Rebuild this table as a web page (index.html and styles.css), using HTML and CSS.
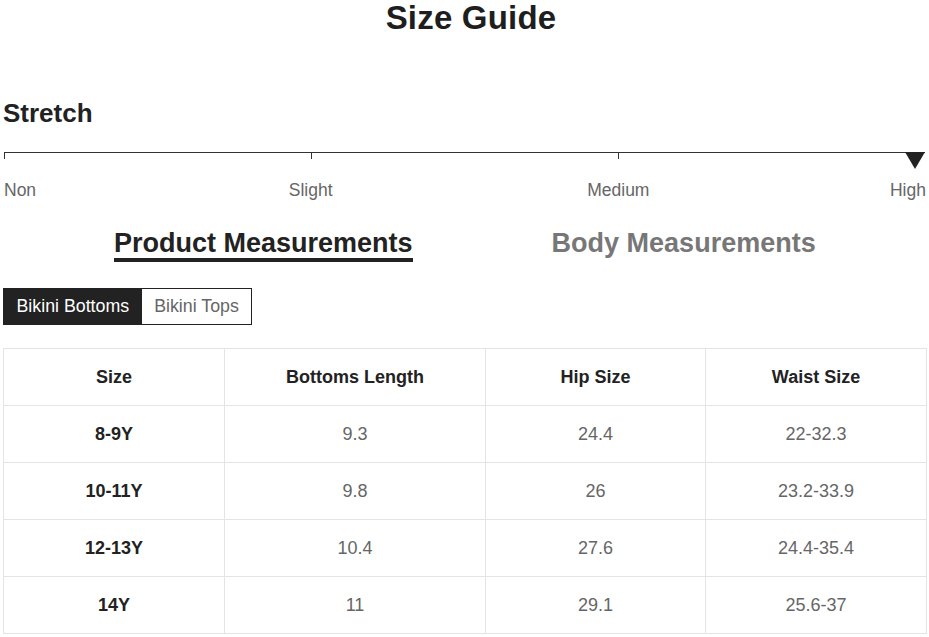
FILE: index.html
```html
<!DOCTYPE html>
<html lang="en">
<head>
<meta charset="utf-8">
<title>Size Guide</title>
<link rel="stylesheet" href="styles.css">
</head>
<body>
<div class="page">
  <h1 class="title">Size Guide</h1>

  <h2 class="stretch-title">Stretch</h2>
  <div class="scale">
    <span class="tick"></span>
    <span class="tick"></span>
    <span class="tick"></span>
    <span class="marker"></span>
  </div>
  <div class="scale-labels">
    <span class="lbl lbl-non">Non</span>
    <span class="lbl lbl-slight">Slight</span>
    <span class="lbl lbl-medium">Medium</span>
    <span class="lbl lbl-high">High</span>
  </div>

  <div class="tabs">
    <span class="tab tab-active">Product Measurements</span>
    <span class="tab">Body Measurements</span>
  </div>

  <div class="subtabs">
    <span class="subtab subtab-active">Bikini Bottoms</span>
    <span class="subtab">Bikini Tops</span>
  </div>

  <table class="sizes">
    <colgroup>
      <col class="c1"><col class="c2"><col class="c3"><col class="c4">
    </colgroup>
    <thead>
      <tr><th>Size</th><th>Bottoms Length</th><th>Hip Size</th><th>Waist Size</th></tr>
    </thead>
    <tbody>
      <tr><th>8-9Y</th><td>9.3</td><td>24.4</td><td>22-32.3</td></tr>
      <tr><th>10-11Y</th><td>9.8</td><td>26</td><td>23.2-33.9</td></tr>
      <tr><th>12-13Y</th><td>10.4</td><td>27.6</td><td>24.4-35.4</td></tr>
      <tr><th>14Y</th><td>11</td><td>29.1</td><td>25.6-37</td></tr>
    </tbody>
  </table>
</div>
</body>
</html>
```

FILE: styles.css
```css
html, body {
  margin: 0;
  padding: 0;
  background: #fff;
}

body {
  font-family: "Liberation Sans", Arial, sans-serif;
  color: #222;
}

.page {
  padding: 0 3px;
}

.title {
  margin: 0;
  font-size: 33px;
  line-height: 35px;
  font-weight: 700;
  text-align: center;
  padding-left: 13px;
  color: #1e1e1e;
  letter-spacing: 0.2px;
}

.stretch-title {
  margin: 63px 0 0 0;
  font-size: 26px;
  line-height: 30px;
  font-weight: 700;
  color: #222;
}

.scale {
  position: relative;
  margin: 24px 1px 0 1px;
  height: 6px;
  border-top: 1px solid #333;
  display: grid;
  grid-template-columns: repeat(3, 1fr);
}

.tick {
  border-left: 1px solid #333;
}

.marker {
  position: absolute;
  right: 0;
  top: -1px;
  width: 0;
  height: 0;
  border-left: 10px solid transparent;
  border-right: 10px solid transparent;
  border-top: 17px solid #222;
}

.scale-labels {
  margin-top: 21px;
  display: grid;
  grid-template-columns: repeat(6, 1fr);
  font-size: 17.5px;
  line-height: 20px;
  color: #666;
}

.lbl-non { grid-column: 1; justify-self: start; padding-left: 1px; }
.lbl-slight { grid-column: 2 / span 2; justify-self: center; }
.lbl-medium { grid-column: 4 / span 2; justify-self: center; }
.lbl-high { grid-column: 6; justify-self: end; }

.tabs {
  margin-top: 28px;
  padding-left: 111px;
  display: flex;
  gap: 139px;
}

.tab {
  font-size: 27px;
  line-height: 30px;
  font-weight: 700;
  color: #777;
  border-bottom: 4px solid transparent;
}

.tab-active {
  color: #222;
  border-bottom-color: #222;
}

.subtabs {
  margin-top: 26px;
  display: inline-flex;
  border: 1px solid #222;
}

.subtab {
  padding: 0 12.5px;
  height: 35px;
  line-height: 35px;
  font-size: 17.8px;
  color: #666;
  background: #fff;
}

.subtab-active {
  background: #222;
  color: #fff;
}

.sizes {
  margin-top: 23px;
  width: 923px;
  table-layout: fixed;
  border-collapse: collapse;
}

.c1 { width: 221px; }
.c2 { width: 261px; }
.c3 { width: 220px; }
.c4 { width: 221px; }

.sizes tr {
  height: 57px;
}

.sizes th,
.sizes td {
  border: 1px solid #e4e4e4;
  padding: 0;
  text-align: center;
  vertical-align: middle;
}

.sizes th {
  font-size: 18px;
  font-weight: 700;
  color: #222;
}

.sizes td {
  font-size: 18px;
  font-weight: 400;
  color: #666;
}
```
